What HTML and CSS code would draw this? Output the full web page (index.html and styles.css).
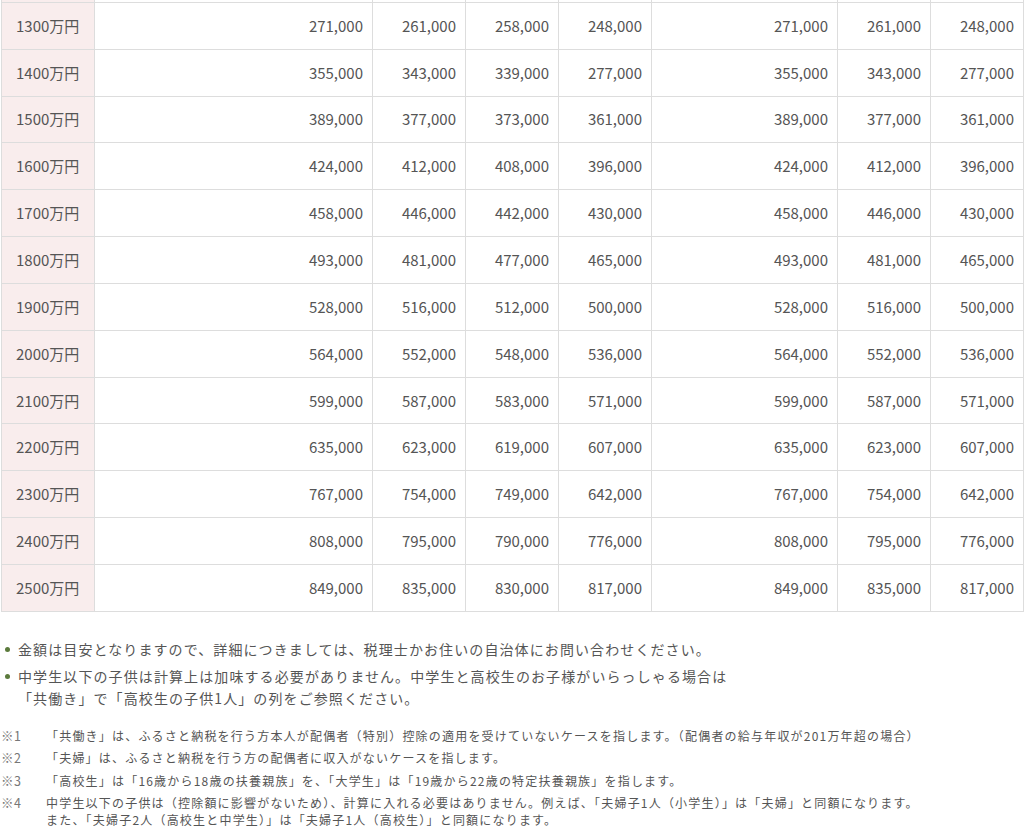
FILE: index.html
```html
<!DOCTYPE html>
<html lang="ja">
<head>
<meta charset="utf-8">
<link rel="stylesheet" href="styles.css">
</head>
<body>
<div class="page">
  <table class="sim">
    <colgroup>
      <col class="c-label"><col class="c-wide"><col class="c-n"><col class="c-n"><col class="c-n"><col class="c-mid"><col class="c-n"><col class="c-n">
    </colgroup>
    <tbody>
      <tr class="prev"><th></th><td></td><td></td><td></td><td></td><td></td><td></td><td></td></tr>
      <tr><th>1300万円</th><td>271,000</td><td>261,000</td><td>258,000</td><td>248,000</td><td>271,000</td><td>261,000</td><td>248,000</td></tr>
      <tr><th>1400万円</th><td>355,000</td><td>343,000</td><td>339,000</td><td>277,000</td><td>355,000</td><td>343,000</td><td>277,000</td></tr>
      <tr><th>1500万円</th><td>389,000</td><td>377,000</td><td>373,000</td><td>361,000</td><td>389,000</td><td>377,000</td><td>361,000</td></tr>
      <tr><th>1600万円</th><td>424,000</td><td>412,000</td><td>408,000</td><td>396,000</td><td>424,000</td><td>412,000</td><td>396,000</td></tr>
      <tr><th>1700万円</th><td>458,000</td><td>446,000</td><td>442,000</td><td>430,000</td><td>458,000</td><td>446,000</td><td>430,000</td></tr>
      <tr><th>1800万円</th><td>493,000</td><td>481,000</td><td>477,000</td><td>465,000</td><td>493,000</td><td>481,000</td><td>465,000</td></tr>
      <tr><th>1900万円</th><td>528,000</td><td>516,000</td><td>512,000</td><td>500,000</td><td>528,000</td><td>516,000</td><td>500,000</td></tr>
      <tr><th>2000万円</th><td>564,000</td><td>552,000</td><td>548,000</td><td>536,000</td><td>564,000</td><td>552,000</td><td>536,000</td></tr>
      <tr><th>2100万円</th><td>599,000</td><td>587,000</td><td>583,000</td><td>571,000</td><td>599,000</td><td>587,000</td><td>571,000</td></tr>
      <tr><th>2200万円</th><td>635,000</td><td>623,000</td><td>619,000</td><td>607,000</td><td>635,000</td><td>623,000</td><td>607,000</td></tr>
      <tr><th>2300万円</th><td>767,000</td><td>754,000</td><td>749,000</td><td>642,000</td><td>767,000</td><td>754,000</td><td>642,000</td></tr>
      <tr><th>2400万円</th><td>808,000</td><td>795,000</td><td>790,000</td><td>776,000</td><td>808,000</td><td>795,000</td><td>776,000</td></tr>
      <tr><th>2500万円</th><td>849,000</td><td>835,000</td><td>830,000</td><td>817,000</td><td>849,000</td><td>835,000</td><td>817,000</td></tr>
    </tbody>
  </table>

  <ul class="notes">
    <li>金額は目安となりますので、詳細につきましては、税理士かお住いの自治体にお問い合わせください。</li>
    <li>中学生以下の子供は計算上は加味する必要がありません。中学生と高校生のお子様がいらっしゃる場合は<br>「共働き」で「高校生の子供1人」の列をご参照ください。</li>
  </ul>

  <dl class="foot">
    <div class="fn"><dt>※1</dt><dd>「共働き」は、ふるさと納税を行う方本人が配偶者（特別）控除の適用を受けていないケースを指します。（配偶者の給与年収が201万年超の場合）</dd></div>
    <div class="fn"><dt>※2</dt><dd>「夫婦」は、ふるさと納税を行う方の配偶者に収入がないケースを指します。</dd></div>
    <div class="fn"><dt>※3</dt><dd>「高校生」は「16歳から18歳の扶養親族」を、「大学生」は「19歳から22歳の特定扶養親族」を指します。</dd></div>
    <div class="fn"><dt>※4</dt><dd>中学生以下の子供は（控除額に影響がないため）、計算に入れる必要はありません。例えば、「夫婦子1人（小学生）」は「夫婦」と同額になります。<br>また、「夫婦子2人（高校生と中学生）」は「夫婦子1人（高校生）」と同額になります。</dd></div>
  </dl>
</div>
</body>
</html>
```

FILE: styles.css
```css
html, body {
  margin: 0;
  padding: 0;
  background: #fff;
}

body {
  font-family: "Noto Sans CJK JP", "Noto Sans", sans-serif;
  color: #555;
  overflow: hidden;
}

.page {
  padding-left: 1px;
}

.sim {
  border-collapse: collapse;
  table-layout: fixed;
  width: 1023px;
  margin-top: -45px;
  font-size: 15px;
  color: #555;
}

.c-label { width: 93px; }
.c-wide { width: 278px; }
.c-n { width: 93px; }
.c-mid { width: 186px; }

.sim tr {
  height: 46.85px;
}

.sim th,
.sim td {
  border: 1px solid #ddd;
  padding: 0 9px 1px 8px;
  vertical-align: middle;
  white-space: nowrap;
}

.sim th {
  background: #f9eded;
  font-weight: normal;
  text-align: left;
  padding-left: 14px;
}

.sim td {
  text-align: right;
}

.notes {
  list-style: none;
  margin: 26px 0 0;
  padding: 0 0 0 17px;
  font-size: 14px;
  line-height: 22px;
  letter-spacing: 1.1px;
  color: #555;
}

.notes li {
  position: relative;
  margin-bottom: 5px;
}

.notes li::before {
  content: "";
  position: absolute;
  left: -13px;
  top: 9px;
  width: 5px;
  height: 5px;
  border-radius: 50%;
  background: #5b7a3c;
}

.foot {
  margin: 18px 0 0;
  font-size: 12px;
  line-height: 17px;
  letter-spacing: 1.2px;
  color: #555;
}

.fn {
  display: flex;
  margin-bottom: 5.5px;
}

.fn dt {
  width: 45px;
  flex: none;
  color: #777;
  font-size: 12.5px;
  letter-spacing: 0.5px;
}

.fn dd {
  margin: 0;
}
```
